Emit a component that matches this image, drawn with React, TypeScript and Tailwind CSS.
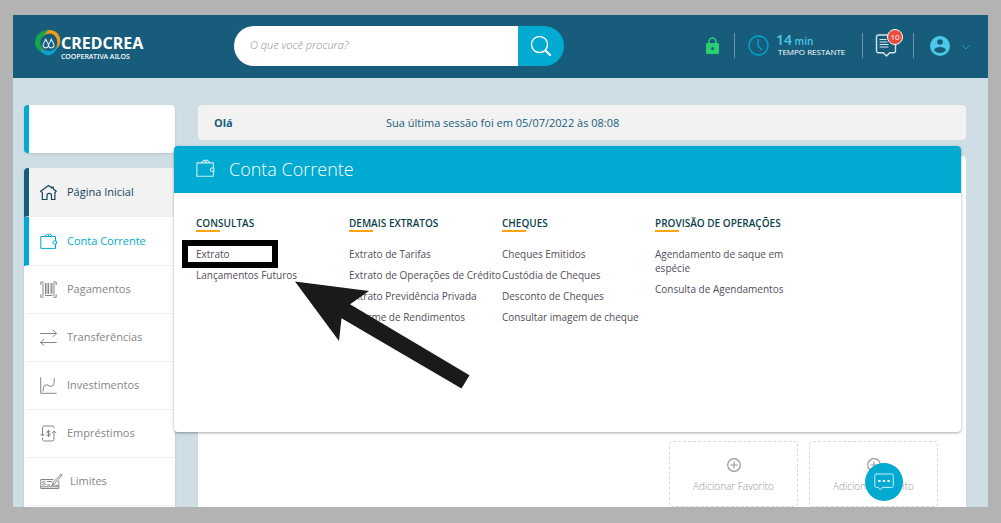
import React from "react";

type IconProps = { className?: string };

const stroke = {
  fill: "none",
  stroke: "currentColor",
  strokeWidth: 1,
  strokeLinecap: "round" as const,
  strokeLinejoin: "round" as const,
};

function HomeIcon({ className = "" }: IconProps) {
  return (
    <svg viewBox="0 0 17 17" className={className} {...stroke} strokeWidth="1.2" aria-hidden="true">
      <path d="M.7 7.300 8.500 1.500l3.400 2.500V3h1.400v2l3 2.300-1.400 1.200v7h-3.400v-4.200c0-2.600-4.500-2.600-4.500 0v4.200H2.300V8.500L.7 7.300" />
    </svg>
  );
}

function WalletIcon({ className = "" }: IconProps) {
  return (
    <svg viewBox="0 0 17 17" className={className} {...stroke} aria-hidden="true">
      <path d="M15.500 7.500v-4H.8v11.900h14.700v-4M16 8h-1.700a1.500 1.500 0 0 0 0 3H16z" />
      <path d="M5 3.300 7.300.9l2 2.400M8.300 2 9.800.8l2.400 2.500" />
    </svg>
  );
}

function BarcodeIcon({ className = "" }: IconProps) {
  return (
    <svg viewBox="0 0 17 17" className={className} {...stroke} aria-hidden="true">
      <path d="M3.300 1H.8v2.600M13.700 1h2.500v2.600M3.300 16.200H.8v-2.600M13.700 16.200h2.500v-2.600" />
      <path d="M3 2.500v12M5.500 2.500v10M7 2.500v10M8.500 2.500v10M11 2.500v10M12 2.500v10M14 2.500v12" />
      <path d="M5.500 14.500h6.500" />
    </svg>
  );
}

function TransferIcon({ className = "" }: IconProps) {
  return (
    <svg viewBox="0 0 17 17" className={className} {...stroke} aria-hidden="true">
      <path d="M.7 4.500h15.600M12.800.8l3.500 3.700-3.500 3.300M16.300 13.500H.7M4 10.200.7 13.500 4 16.400" />
    </svg>
  );
}

function ChartIcon({ className = "" }: IconProps) {
  return (
    <svg viewBox="0 0 17 17" className={className} {...stroke} aria-hidden="true">
      <path d="M.7.700v15.600h15.600M3 14.300c.5-3.500.5-6 3-6.400 2.500-.4 3.500 2.200 6 1.300 2.300-.8 2.200-3.500 2.300-7.500" />
    </svg>
  );
}

function LoanIcon({ className = "" }: IconProps) {
  return (
    <svg viewBox="0 0 17 17" className={className} {...stroke} aria-hidden="true">
      <path d="M2.500 10.500V3c0-1.300.7-2 2-2h7.500c1.300 0 2 .7 2 2M.8 9.200l1.700 1.800 1.700-1.800M14 6.200V14c0 1.300-.7 2-2 2H4.500c-1.300 0-2-.7-2-2v-1M12.300 7.800 14 6l2 1.800" />
      <path d="M10.300 6.700c-.6-.8-3.600-1-3.600.5 0 1.600 3.700.8 3.700 2.500 0 1.500-3.100 1.500-3.900.4M8.500 5.300v6.300" />
    </svg>
  );
}

function CheckIcon({ className = "" }: IconProps) {
  return (
    <svg viewBox="0 0 23 17" className={className} {...stroke} aria-hidden="true">
      <path d="M13 6.500H.8v9h18V8M.8 13.800h18" />
      <path d="M5.300 8.800c-.5-.7-2.800-.7-2.800.4 0 1.200 2.800.7 2.800 2 0 1.100-2.400 1-3 .2M7.300 8.500h4.500M7.300 12h2.500M12 12.500l1.500-3.500 7.800-8 1 1-7.700 8.500-2.600 2 2-.8 1.500.7h2" />
    </svg>
  );
}

function Logo() {
  return (
    <a href="#inicio" aria-label="Credcrea Cooperativa Ailos" className="flex shrink-0 items-start text-white">
      <svg viewBox="0 0 26 26" className="h-[26px] w-[26px]" aria-hidden="true">
        <circle cx="14.500" cy="10.700" r="9" fill="none" stroke="#f39c12" strokeWidth="3.600" />
        <path d="M12 1.300A10.800 10.800 0 0 0 8.500 22.500C3.500 16 5 6 12 1.300z" fill="#12a84b" stroke="#12a84b" strokeWidth="1.200" />
        <path d="M5.500 18.500c5 3.500 12.500 3 17.500-3-1.500 6-5.500 10-10.500 9.700-3.500-.2-6.500-3-7-6.700z" fill="#0aa3cf" />
        <circle cx="13.800" cy="12.500" r="8.600" fill="#175d7b" />
        <path d="M8.800 17c-1.300-1.200-.8-2.800.5-4.800l1.500-3 1.500 3c1.200 2 1.800 3.600.5 4.800-1.200 1-2.800 1-4 0zM14.300 17c-1.300-1.200-.8-2.800.5-4.800l1.500-3 1.500 3c1.200 2 1.800 3.600.5 4.800-1.200 1-2.800 1-4 0z" fill="none" stroke="#dceaf0" strokeWidth="1.100" />
      </svg>
      <span className="flex flex-col pt-1 font-['Noto_Sans',sans-serif]">
        <span className="text-[16px] leading-[18px] font-bold">CREDCREA</span>
        <span className="text-[7px] leading-[10px] font-medium">COOPERATIVA AILOS</span>
      </span>
    </a>
  );
}

function Header() {
  return (
    <header className="flex h-[63px] shrink-0 items-center bg-[#175d7b] pr-[18px] pb-0.5 pl-[22px]">
      <div className="w-[199px] shrink-0">
        <Logo />
      </div>
      <form className="flex h-10 w-[330px] overflow-hidden rounded-full" onSubmit={(e) => e.preventDefault()}>
        <input
          type="search"
          aria-label="Buscar"
          placeholder="O que você procura?"
          className="min-w-0 flex-1 bg-white px-4 text-[11px] font-light text-gray-600 italic outline-none placeholder:text-[#8f8f8f]"
        />
        <button type="submit" aria-label="Pesquisar" className="flex w-[46px] items-center justify-center bg-[#00aad1] text-white">
          <svg viewBox="0 0 22 22" className="h-[22px] w-[22px]" fill="none" stroke="currentColor" aria-hidden="true">
            <circle cx="9.500" cy="9.500" r="8" strokeWidth="1.400" />
            <path d="m15.300 15.300 5.500 5.500" strokeWidth="2" />
          </svg>
        </button>
      </form>
      <div className="ml-auto flex items-center">
        <svg viewBox="0 0 13 17" className="mr-[15px] h-[17px] w-[13px] text-[#2ecc71]" aria-hidden="true">
          <rect x="0" y="6" width="13" height="11" rx="1" fill="currentColor" />
          <path d="M3 7V4.500a3.500 3.500 0 0 1 7 0V7" fill="none" stroke="currentColor" strokeWidth="1.600" />
          <circle cx="6.500" cy="11.500" r="1.500" fill="#175d7b" />
        </svg>
        <span className="h-[25px] w-px bg-[#7296a8]" />
        <svg viewBox="0 0 21 21" className="mr-[7px] ml-[13px] h-[21px] w-[21px] text-[#00a8d2]" {...stroke} aria-hidden="true">
          <circle cx="10.500" cy="10.500" r="9.500" strokeWidth="1.300" />
          <path d="M10 4.500v6.500l3.500 3.500" strokeWidth="1.300" />
        </svg>
        <div className="flex w-[86px] flex-col">
          <span className="text-[10px] leading-3 font-semibold text-[#4cc8ea]">
            <span className="text-sm leading-3 font-semibold">14</span> min
          </span>
          <span className="pl-0.5 text-[8px] leading-[10px] font-medium whitespace-nowrap text-white">TEMPO RESTANTE</span>
        </div>
        <span className="h-[25px] w-px bg-[#7296a8]" />
        <button type="button" aria-label="Mensagens" className="relative mx-3 flex h-[26px] w-[26px] items-center text-[#d5e4ea]">
          <svg viewBox="0 0 23 23" className="h-[23px] w-[23px]" {...stroke} aria-hidden="true">
            <path d="M20.500 9v7.500c0 1.500-.7 2.200-2 2.200h-3.800L11.500 22l-3.200-3.300H3.500c-1.300 0-2-.7-2-2.200V3c0-1.300.7-2 2-2H14" strokeWidth="1.400" />
            <path d="M5 5.500h6M5 8h7M5 10.500h8M5 13h8" strokeWidth="1.200" />
          </svg>
          <span className="absolute -top-1 -right-0.5 flex h-4 w-4 items-center justify-center rounded-full border border-white bg-[#e94b3c] text-[8px] leading-none text-white">
            10
          </span>
        </button>
        <span className="h-[25px] w-px bg-[#7296a8]" />
        <button type="button" aria-label="Minha conta" className="ml-4 flex items-center gap-3 text-[#4cc8ea]">
          <svg viewBox="0 0 20 20" className="h-5 w-5" aria-hidden="true">
            <circle cx="10" cy="10" r="10" fill="currentColor" />
            <circle cx="10" cy="6" r="2.800" fill="#175d7b" />
            <path d="M4 13.800c1.800-3.700 10.200-3.700 12 0-2.500 4.300-9.500 4.300-12 0z" fill="#175d7b" />
          </svg>
          <svg viewBox="0 0 8 5" className="mt-1 h-[5px] w-2 text-[#0aa0c8]" {...stroke} aria-hidden="true">
            <path d="m.5.500 3.500 3.500L7.500.500" />
          </svg>
        </button>
      </div>
    </header>
  );
}

const navItems = [
  { label: "Página Inicial", Icon: HomeIcon, tone: "h-[49px] border-l-[#175d7b] bg-[#f2f2f2] text-[#12455c] font-medium", icon: "w-[17px] mr-2.5" },
  { label: "Conta Corrente", Icon: WalletIcon, tone: "h-[49px] border-l-[#00aad1] bg-white text-[#00aad1]", icon: "w-[17px] mr-2.5" },
  { label: "Pagamentos", Icon: BarcodeIcon, tone: "h-12 border-l-white bg-white text-[#858585]", icon: "w-[17px] mr-2.5" },
  { label: "Transferências", Icon: TransferIcon, tone: "h-12 border-l-white bg-white text-[#858585]", icon: "w-[17px] mr-2.5" },
  { label: "Investimentos", Icon: ChartIcon, tone: "h-12 border-l-white bg-white text-[#858585]", icon: "w-[17px] mr-2.5" },
  { label: "Empréstimos", Icon: LoanIcon, tone: "h-12 border-l-white bg-white text-[#858585]", icon: "w-[17px] mr-2.5" },
  { label: "Limites", Icon: CheckIcon, tone: "h-12 border-l-white bg-white text-[#858585]", icon: "w-[23px] mr-[7px]" },
];

function Sidebar() {
  return (
    <aside className="flex w-[151px] shrink-0 flex-col gap-[15px]">
      <div className="h-12 shrink-0 rounded border-l-[5px] border-l-[#00aad1] bg-white shadow" />
      <nav aria-label="Principal" className="flex-1 rounded-t bg-white shadow">
        {navItems.map(({ label, Icon, tone, icon }) => (
          <a
            key={label}
            href="#menu"
            className={`flex items-center border-b border-l-[5px] border-b-[#efefef] pl-[11px] text-[11px] first:rounded-t ${tone}`}
          >
            <Icon className={`h-[17px] shrink-0 ${icon}`} />
            {label}
          </a>
        ))}
      </nav>
    </aside>
  );
}

const columns = [
  { title: "CONSULTAS", items: ["Extrato", "Lançamentos Futuros"] },
  {
    title: "DEMAIS EXTRATOS",
    items: ["Extrato de Tarifas", "Extrato de Operações de Crédito", "Extrato Previdência Privada", "Informe de Rendimentos"],
  },
  {
    title: "CHEQUES",
    items: ["Cheques Emitidos", "Custódia de Cheques", "Desconto de Cheques", "Consultar imagem de cheque"],
  },
  { title: "PROVISÃO DE OPERAÇÕES", items: ["Agendamento de saque em espécie", "Consulta de Agendamentos"] },
];

function MegaMenu() {
  return (
    <section className="absolute top-[68px] right-[27px] left-[161px] h-[286px] rounded bg-white shadow-[0_1px_3px_rgba(0,0,0,0.35)]">
      <h1 className="flex h-[47px] items-center gap-[14px] rounded-t bg-[#00aad1] pb-0.5 pl-[22px] text-lg font-light text-white">
        <WalletIcon className="h-[19px] w-[19px] opacity-80" />
        Conta Corrente
      </h1>
      <div className="grid grid-cols-5 pt-[23px] pl-[22px]">
        {columns.map((column) => (
          <div key={column.title}>
            <h2 className="text-[10px] leading-[14px] font-semibold whitespace-nowrap text-[#0b3f4c]">{column.title}</h2>
            <div className="h-0.5 w-6 bg-[#ffa412]" />
            <ul className="mt-[15px] flex flex-col gap-[7px]">
              {column.items.map((item) => (
                <li key={item} className="relative text-[10px] leading-[14px] text-[#544d5a]">
                  <a href="#item">{item}</a>
                  {item === "Extrato" && (
                    <span className="absolute -top-[7px] -left-[14px] h-7 w-24 border-[6px] border-black" />
                  )}
                </li>
              ))}
            </ul>
          </div>
        ))}
      </div>
      <svg viewBox="0 0 175 108" className="absolute top-[135px] left-[121px] h-[108px] w-[175px]" aria-hidden="true">
        <path d="M0 .5 74 10 55 23.200 174.500 94.300 166.500 107.500 46.500 37.200 44 60z" fill="#1b191b" />
      </svg>
    </section>
  );
}

function FavoriteCard() {
  return (
    <button
      type="button"
      className="flex h-[66px] w-[129px] flex-col items-center gap-[7px] rounded border border-dashed border-[#d9d9d9] pt-4 text-[10px] leading-[14px] font-light text-[#969696]"
    >
      <svg viewBox="0 0 14 14" className="h-[14px] w-[14px] shrink-0" {...stroke} aria-hidden="true">
        <circle cx="7" cy="7" r="6.300" strokeWidth="1.200" />
        <path d="M7 3.800v6.400M3.800 7h6.400" />
      </svg>
      Adicionar Favorito
    </button>
  );
}

export default function App() {
  return (
    <div className="flex h-screen flex-col bg-[#b3b3b3] px-[13px] pt-[15px] pb-4 font-['Open_Sans',sans-serif]">
      <div className="relative flex min-h-0 flex-1 flex-col overflow-hidden bg-[#cfdde4]">
        <Header />
        <div className="relative flex min-h-0 flex-1 gap-[23px] pt-[27px] pr-[22px] pl-[11px]">
          <Sidebar />
          <main className="flex min-w-0 flex-1 flex-col gap-4">
            <div className="flex h-[35px] shrink-0 items-center rounded bg-[#f2f2f2] px-4 pt-0.5 text-[11px] text-[#175d7b]">
              <strong className="w-[172px]">Olá</strong>
              <p>Sua última sessão foi em 05/07/2022 às 08:08</p>
            </div>
            <div className="flex flex-1 items-end justify-end gap-[11px] rounded-t bg-white pr-7">
              <FavoriteCard />
              <FavoriteCard />
            </div>
          </main>
          <MegaMenu />
        </div>
        <button
          type="button"
          aria-label="Abrir chat"
          className="absolute right-[85px] bottom-1.5 flex h-[38px] w-[38px] items-center justify-center rounded-full bg-[#00aad1] text-[#c9eef7]"
        >
          <svg viewBox="0 0 20 18" className="h-[18px] w-5" {...stroke} aria-hidden="true">
            <path d="M2.500 1h15c1.200 0 1.700.5 1.700 1.500v10.300c0 1.100-.5 1.600-1.700 1.600H8.300L6.500 17l-2.200-2.600H2.500c-1.200 0-1.700-.5-1.700-1.600V2.500C.8 1.500 1.300 1 2.500 1z" />
            <path d="M5 8h.8M9.600 8h.8M14.200 8h.8" strokeWidth="2" stroke="#fff" />
          </svg>
        </button>
      </div>
    </div>
  );
}
